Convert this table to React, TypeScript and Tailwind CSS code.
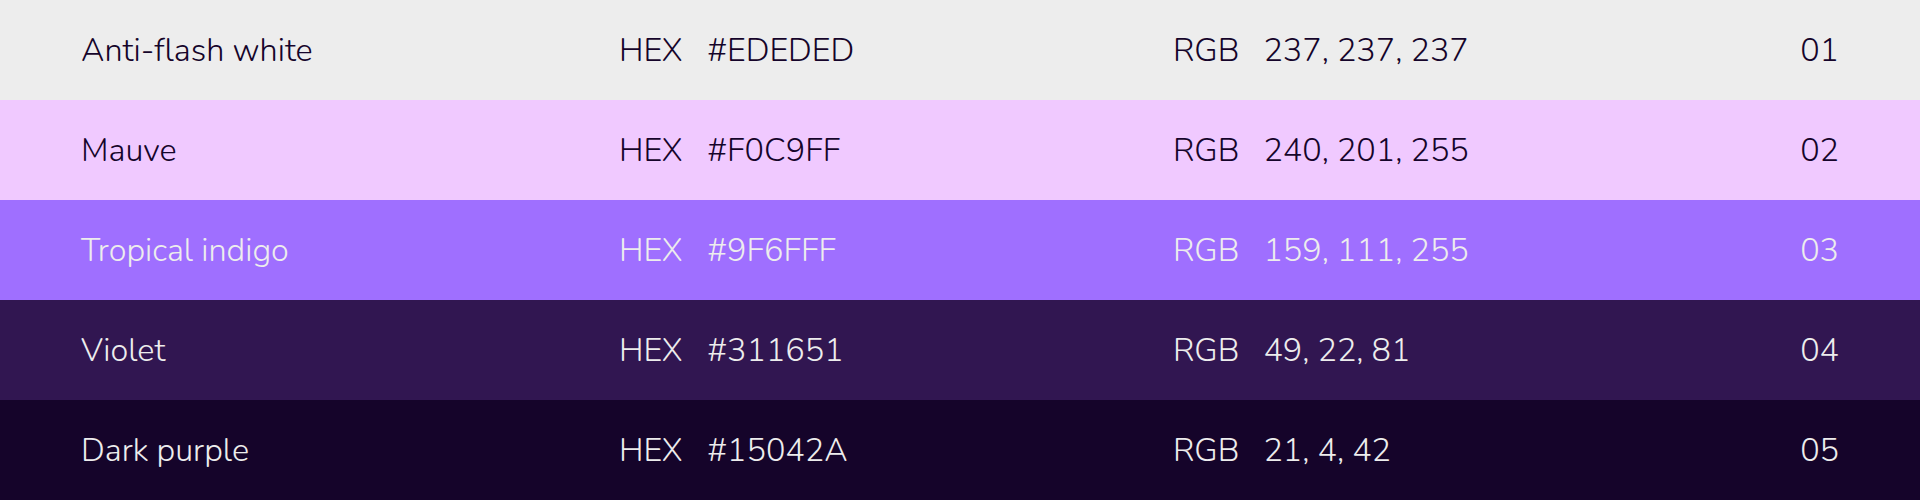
import React from "react";

type Swatch = {
  name: string;
  hex: string;
  rgb: string;
  bg: string;
  text: string;
};

const swatches: Swatch[] = [
  { name: "Anti-flash white", hex: "#EDEDED", rgb: "237, 237, 237", bg: "bg-[#ededed]", text: "text-[#15042a]" },
  { name: "Mauve", hex: "#F0C9FF", rgb: "240, 201, 255", bg: "bg-[#f0c9ff]", text: "text-[#15042a]" },
  { name: "Tropical indigo", hex: "#9F6FFF", rgb: "159, 111, 255", bg: "bg-[#9f6fff]", text: "text-[#ededed]" },
  { name: "Violet", hex: "#311651", rgb: "49, 22, 81", bg: "bg-[#311651]", text: "text-[#ededed]" },
  { name: "Dark purple", hex: "#15042A", rgb: "21, 4, 42", bg: "bg-[#15042a]", text: "text-[#ededed]" },
];

const App: React.FC = () => {
  return (
    <div className="w-[1920px] h-[500px] flex flex-col font-['Nunito','Open_Sans',sans-serif] font-light text-[32.4px]">
      {swatches.map((s, i) => (
        <div
          key={s.hex}
          className={`h-[100px] flex items-center px-[81px] ${s.bg} ${s.text}`}
        >
          <div className="w-[538px]">{s.name}</div>
          <div className="w-[554px] flex gap-[25px]">
            <span>HEX</span>
            <span>{s.hex}</span>
          </div>
          <div className="flex gap-[24px]">
            <span>RGB</span>
            <span>{s.rgb}</span>
          </div>
          <div className="ml-auto">{String(i + 1).padStart(2, "0")}</div>
        </div>
      ))}
    </div>
  );
};

export default App;
